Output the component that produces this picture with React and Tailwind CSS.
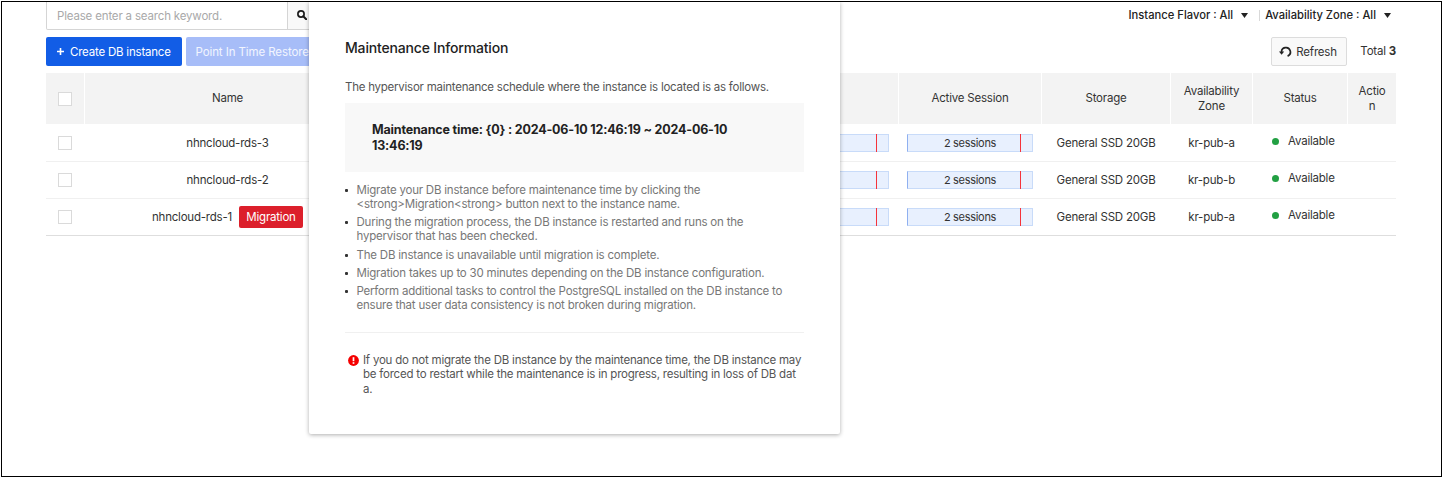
import React from "react";

const COLS = "grid grid-cols-[39px_286px_384px_144px_143px_129px_82px_95px_48px]";

const rows = [
  { name: "nhncloud-rds-3", zone: "kr-pub-a" },
  { name: "nhncloud-rds-2", zone: "kr-pub-b" },
  { name: "nhncloud-rds-1", zone: "kr-pub-a", migration: true },
];

const headers = ["", "Name", "", "", "Active Session", "Storage", "Availability Zone", "Status", "Action"];

function Checkbox() {
  return <span className="block h-[14px] w-[14px] border border-[#dadada] bg-white" />;
}

function Meter({ label }) {
  return (
    <div className="relative ml-[8px] flex h-[18px] w-[126px] items-center justify-center border border-[#c8dbf9] border-l-[#8fb0f0] bg-[#e8f0fe] text-[11px] tracking-[-0.3px]">
      {label}
      <span className="absolute -top-px left-[112px] h-[18px] w-px bg-[#f5333b]" />
    </div>
  );
}

function Caret() {
  return (
    <svg className="ml-[8px] h-[5px] w-[7px] shrink-0" viewBox="0 0 7 5">
      <path d="M0 0h7L3.5 5z" fill="#222" />
    </svg>
  );
}

function Toolbar() {
  return (
    <div className="flex h-[71px] justify-between">
      <div>
        <div className="flex h-[28px] w-[290px] overflow-hidden rounded-b-[2px] border border-t-0 border-[#d5d5d5]">
          <div className="flex w-[241px] items-center border-r border-[#d5d5d5] pt-[2px] pl-[10px] text-[11.5px] tracking-[-0.17px] text-[#a9a9a9]">
            Please enter a search keyword.
          </div>
          <div className="flex flex-1 items-center bg-[#f9f9f9] pl-[9px]">
            <svg className="mb-px h-[10px] w-[10px] shrink-0" viewBox="0 0 10 10" fill="none" stroke="#1c1c1c">
              <circle cx="4" cy="4" r="3.1" strokeWidth="1.7" />
              <path d="M6.3 6.3 9.2 9.2" strokeWidth="2" strokeLinecap="round" />
            </svg>
          </div>
        </div>
        <div className="mt-[7px] flex gap-[3.5px]">
          <div className="flex h-[29px] w-[136px] items-center rounded-[2px] bg-[#125de6] pl-[11px] text-[11.5px] text-white">
            <svg className="mr-[6px] h-[7px] w-[7px] shrink-0" viewBox="0 0 7 7">
              <path d="M3.5 0v7M0 3.5h7" stroke="#fff" strokeWidth="1.6" />
            </svg>
            <span className="pt-[2px]">Create DB instance</span>
          </div>
          <div className="flex h-[29px] w-[132px] items-center rounded-[2px] bg-[#a7bdf8] pt-[2px] pl-[10px] text-[11.5px] tracking-[-0.1px] whitespace-nowrap text-white/85">
            Point In Time Restore
          </div>
        </div>
      </div>
      <div className="flex flex-col items-end">
        <div className="flex h-[27px] items-center pr-[5px] text-[11.2px] font-medium tracking-normal text-[#222]">
          Instance Flavor : All
          <Caret />
          <span className="mr-[5px] ml-[11px] h-[11px] w-px bg-[#d9d9d9]" />
          Availability Zone : All
          <Caret />
        </div>
        <div className="mt-[8px] flex items-center">
          <div className="flex h-[29px] w-[76px] items-center rounded-[2px] border border-[#dcdcdc] bg-[#f9f9f9] pl-[7px] text-[11.5px] text-[#333]">
            <svg className="mr-[4px] h-[12px] w-[13px] shrink-0" viewBox="0 0 13 12" fill="none">
              <path d="M2.6 6.5A4.4 4.4 0 1 1 8.6 10.1" stroke="#222" strokeWidth="1.7" />
              <path d="M0 5.6h5.2L2.6 8.8z" fill="#222" />
            </svg>
            <span className="pt-[2px]">Refresh</span>
          </div>
          <div className="ml-[13px] text-[11.5px] whitespace-nowrap">
            Total <b className="font-bold">3</b>
          </div>
        </div>
      </div>
    </div>
  );
}

function InstanceTable() {
  return (
    <div className="text-[11.5px] text-[#333]">
      <div className={`${COLS} h-[51px] bg-[#f3f3f3]`}>
        {headers.map((h, i) => (
          <div
            key={i}
            className={`flex items-center justify-center text-center leading-[14.5px] ${i < 8 ? "border-r border-white" : ""}`}
          >
            {i === 0 ? (
              <Checkbox />
            ) : (
              <span className={i === 8 ? "w-[28px] break-all" : i === 6 ? "w-[60px]" : ""}>{h}</span>
            )}
          </div>
        ))}
      </div>
      {rows.map((r, i) => (
        <div
          key={r.name}
          className={`${COLS} items-center border-b ${i === 0 ? "h-[38px] pt-px" : "h-[37px]"} ${i === 2 ? "border-[#dedede]" : "border-[#f0f0f0]"}`}
        >
          <div className="flex justify-center pr-px">
            <Checkbox />
          </div>
          <div className="flex items-center justify-center pr-px">
            <span className="pt-px">{r.name}</span>
            {r.migration && (
              <span className="ml-[7px] flex h-[22px] w-[64px] items-center justify-center rounded-[2px] bg-[#dc1f2b] pt-px text-white">
                Migration
              </span>
            )}
          </div>
          <div />
          <div>
            <Meter />
          </div>
          <div>
            <Meter label="2 sessions" />
          </div>
          <div className="pt-px pr-px text-center">General SSD 20GB</div>
          <div className="pt-px pr-px text-center">{r.zone}</div>
          <div className="flex items-center pb-[3px] pl-[19px]">
            <span className="mr-[9px] h-[7px] w-[7px] rounded-full bg-[#22a043]" />
            Available
          </div>
          <div />
        </div>
      ))}
    </div>
  );
}

const notes = [
  ["Migrate your DB instance before maintenance time by clicking the", "<strong>Migration<strong> button next to the instance name."],
  ["During the migration process, the DB instance is restarted and runs on the", "hypervisor that has been checked."],
  ["The DB instance is unavailable until migration is complete."],
  ["Migration takes up to 30 minutes depending on the DB instance configuration."],
  ["Perform additional tasks to control the PostgreSQL installed on the DB instance to", "ensure that user data consistency is not broken during migration."],
];

function Lines({ lines }) {
  return (
    <div className="whitespace-nowrap">
      {lines.map((l) => (
        <div key={l}>{l}</div>
      ))}
    </div>
  );
}

function MaintenanceDialog() {
  return (
    <div className="absolute top-0 left-[307px] h-[432px] w-[531px] rounded-b-[2px] bg-white px-[36px] shadow-[0_1px_4px_rgba(0,0,0,0.32)]">
      <h2 className="mt-[36px] text-[14px] leading-[20px] font-medium tracking-[-0.17px] text-[#222]">Maintenance Information</h2>
      <p className="mt-[21px] text-[11.5px] leading-[16px] tracking-[-0.24px] whitespace-nowrap text-[#555]">
        The hypervisor maintenance schedule where the instance is located is as follows.
      </p>
      <div className="mt-[8px] h-[69px] w-[459px] bg-[#f8f8f8] pt-[19px] pl-[27px] text-[12.5px] leading-[16.3px] font-bold tracking-[-0.17px] text-[#222]">
        <Lines lines={["Maintenance time: {0} : 2024-06-10 12:46:19 ~ 2024-06-10", "13:46:19"]} />
      </div>
      <ul className="mt-[10.5px] flex flex-col gap-[3.7px] text-[11.5px] leading-[14.4px] text-[#777]">
        {notes.map((n) => (
          <li key={n[0]} className="flex">
            <span className="mt-[6px] mr-[8.5px] h-[3px] w-[3px] shrink-0 rounded-[1px] bg-[#333]" />
            <Lines lines={n} />
          </li>
        ))}
      </ul>
      <div className="mt-[19.5px] w-[459px] border-t border-[#f0f0f0]" />
      <div className="mt-[20px] flex pl-[3px] text-[11.5px] leading-[14.4px] tracking-[-0.22px] text-[#555]">
        <svg className="mt-[1.5px] mr-[4px] h-[11px] w-[11px] shrink-0" viewBox="0 0 11 11">
          <circle cx="5.5" cy="5.5" r="5.4" fill="#f50000" />
          <path d="M5.5 2.2v4" stroke="#fff" strokeWidth="1.7" />
          <path d="M5.5 7.2v1.6" stroke="#fff" strokeWidth="1.7" />
        </svg>
        <Lines
          lines={[
            "If you do not migrate the DB instance by the maintenance time, the DB instance may",
            "be forced to restart while the maintenance is in progress, resulting in loss of DB dat",
            "a.",
          ]}
        />
      </div>
    </div>
  );
}

export default function App() {
  return (
    <div className="h-[478px] w-[1442px] overflow-hidden bg-white pt-px pl-px font-['Inter',sans-serif] tracking-[-0.21px] text-[#333]">
      <div className="relative h-[476px] w-[1441px] overflow-hidden border border-black pr-[45px] pl-[44px]">
        <Toolbar />
        <InstanceTable />
        <MaintenanceDialog />
      </div>
    </div>
  );
}
